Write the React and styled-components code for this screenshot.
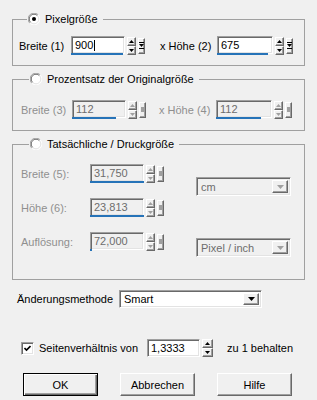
import React from 'react';
import styled, { createGlobalStyle, css } from 'styled-components';

const Global = createGlobalStyle`
  html, body { margin: 0; padding: 0; background: #f0f0f0; }
  body { font-family: "Liberation Sans", Arial, sans-serif; font-size: 11px; color: #000; }
`;

const raised = css`
  box-sizing: border-box;
  background: #f0f0f0;
  border: 1px solid;
  border-color: #fff #696969 #696969 #fff;
  box-shadow: inset -1px -1px 0 #a0a0a0;
`;

const sunken = css`
  box-sizing: border-box;
  border: 1px solid;
  border-color: #a0a0a0 #fff #fff #a0a0a0;
  box-shadow: inset 1px 1px 0 #696969, inset -1px -1px 0 #e3e3e3;
`;

const Dialog = styled.div`
  width: 317px;
  height: 400px;
  box-sizing: border-box;
  padding: 12px 12px 0 12px;
  display: flex;
  flex-direction: column;
`;

const Group = styled.fieldset`
  margin: 0 0 ${(p) => p.$mb}px 0;
  padding: ${(p) => p.$pt}px 0 ${(p) => p.$pb}px ${(p) => p.$pl}px;
  border: 1px solid #a0a0a0;
  min-inline-size: 0;
  display: flex;
  flex-direction: column;
`;

const Legend = styled.legend`
  margin-left: 8px;
  padding: 0 5px 0 1px;
  height: 14px;
  display: flex;
  align-items: center;
  gap: 5px;
`;

const Row = styled.div`
  display: flex;
  align-items: center;
`;

const Label = styled.span`
  width: ${(p) => p.$w}px;
  margin-left: ${(p) => p.$ml || 0}px;
  flex: none;
  white-space: nowrap;
  color: ${(p) => (p.$disabled ? '#8f8f8f' : '#000')};
`;

const FieldWrap = styled.div`
  display: flex;
  align-items: center;
  gap: 2px;
`;

const FieldCol = styled.div`
  display: flex;
  flex-direction: column;
  width: ${(p) => p.$w}px;
`;

const Box = styled.div`
  ${sunken};
  height: 18px;
  background: ${(p) => (p.$disabled ? '#f0f0f0' : '#fff')};
  color: ${(p) => (p.$disabled ? '#6d6d6d' : '#000')};
  padding: 0 3px;
  display: flex;
  align-items: center;
`;

const Caret = styled.span`
  width: 1px;
  height: 11px;
  background: #000;
  margin-left: 1px;
`;

const Bar = styled.div`
  height: 2px;
  margin-top: -1px;
  background: #2673b8;
`;

const Spin = styled.div`
  display: flex;
  flex-direction: column;
  width: ${(p) => p.$w}px;
  height: ${(p) => p.$h}px;
`;

const SpinBtn = styled.div`
  ${raised};
  flex: 1;
  display: flex;
  align-items: center;
  justify-content: center;
`;

const Extra = styled.div`
  ${raised};
  width: 7px;
  height: 16px;
  display: flex;
  align-items: center;
  justify-content: center;
`;

const Dots = styled.div`
  width: 3px;
  height: 5px;
  background: #a0a0a0;
`;

const RightCol = styled.div`
  display: flex;
  flex-direction: column;
  gap: ${(p) => p.$gap}px;
  padding-top: ${(p) => p.$pt}px;
  margin-left: ${(p) => p.$ml}px;
`;

const Cols = styled.div`
  display: flex;
`;

const LeftCol = styled.div`
  display: flex;
  flex-direction: column;
  gap: ${(p) => p.$gap}px;
`;

const Select = styled.div`
  ${sunken};
  width: ${(p) => p.$w}px;
  height: ${(p) => p.$h}px;
  background: ${(p) => (p.$disabled ? '#f0f0f0' : '#fff')};
  color: ${(p) => (p.$disabled ? '#6d6d6d' : '#000')};
  display: flex;
  align-items: center;
  justify-content: space-between;
  padding: 2px 2px 2px 4px;
`;

const SelectArrow = styled.div`
  ${raised};
  width: 16px;
  height: 100%;
  display: flex;
  align-items: center;
  justify-content: center;
`;

const MethodRow = styled(Row)`
  margin-top: 10px;
  padding-left: 5px;
`;

const AspectRow = styled(Row)`
  margin-top: 31px;
  padding-left: 9px;
`;

const Check = styled.div`
  ${sunken};
  width: 13px;
  height: 13px;
  background: #fff;
  display: flex;
  align-items: center;
  justify-content: center;
  margin-right: 5px;
  flex: none;
`;

const Buttons = styled.div`
  display: flex;
  gap: 22px;
  margin-top: 16px;
  padding-left: 11px;
`;

const Button = styled.div`
  ${raised};
  width: 75px;
  height: 23px;
  display: flex;
  align-items: center;
  justify-content: center;
  ${(p) =>
    p.$default &&
    css`
      outline: 1px solid #000;
      outline-offset: -1px;
      border-color: #000 #000 #000 #000;
      box-shadow: inset 1px 1px 0 #fff, inset -1px -1px 0 #696969, inset -2px -2px 0 #a0a0a0;
    `}
`;

const Tri = ({ up, color = '#000' }) => (
  <svg width="5" height="3" viewBox="0 0 5 3">
    <path d={up ? 'M2.5 0 L5 3 L0 3 Z' : 'M0 0 L5 0 L2.5 3 Z'} fill={color} />
  </svg>
);

const BigTri = ({ color = '#000' }) => (
  <svg width="7" height="4" viewBox="0 0 7 4">
    <path d="M0 0 H7 L3.5 4 Z" fill={color} />
  </svg>
);

const DropGlyph = () => (
  <svg width="5" height="8" viewBox="0 0 5 8">
    <rect x="0" y="0" width="5" height="1" fill="#000" />
    <path d="M0 2 H5 L2.5 5 Z" fill="#000" />
    <rect x="0" y="6" width="5" height="1" fill="#000" />
  </svg>
);

const Radio = ({ checked }) => (
  <svg width="12" height="12" viewBox="0 0 12 12">
    <circle cx="6" cy="6" r="5.5" fill="#fff" />
    <path d="M1.8 10.2 A5.5 5.5 0 0 1 10.2 1.8" stroke="#a0a0a0" fill="none" />
    <path d="M2.6 9.4 A4.6 4.6 0 0 1 9.4 2.6" stroke="#696969" fill="none" />
    <path d="M10.2 1.8 A5.5 5.5 0 0 1 1.8 10.2" stroke="#ffffff" fill="none" />
    <path d="M9.4 2.6 A4.6 4.6 0 0 1 2.6 9.4" stroke="#e3e3e3" fill="none" />
    {checked && <circle cx="6" cy="6" r="2" fill="#000" />}
  </svg>
);

const NumField = ({ value, w = 54, bar, disabled, caret }) => (
  <FieldWrap>
    <FieldCol $w={w}>
      <Box $disabled={disabled}>
        {value}
        {caret && <Caret />}
      </Box>
      <Bar style={{ width: bar }} />
    </FieldCol>
    <Spin $w={9} $h={18}>
      <SpinBtn><Tri up color={disabled ? '#a0a0a0' : '#000'} /></SpinBtn>
      <SpinBtn><Tri color={disabled ? '#a0a0a0' : '#000'} /></SpinBtn>
    </Spin>
    <Extra>{disabled ? <Dots /> : <DropGlyph />}</Extra>
  </FieldWrap>
);

const Dropdown = ({ value, w, h, disabled }) => (
  <Select $w={w} $h={h} $disabled={disabled}>
    <span>{value}</span>
    <SelectArrow>
      <BigTri color={disabled ? '#a0a0a0' : '#000'} />
    </SelectArrow>
  </Select>
);

export default function App() {
  return (
    <>
      <Global />
      <Dialog>
        <Group $mb={6} $pt={10} $pb={10} $pl={6}>
          <Legend><Radio checked />Pixelgröße</Legend>
          <Row>
            <Label $w={52}>Breite (1)</Label>
            <NumField value="900" bar={52} caret />
            <Label $w={57} $ml={15}>x Höhe (2)</Label>
            <NumField value="675" w={56} bar={51} />
          </Row>
        </Group>

        <Group $mb={6} $pt={14} $pb={11} $pl={8}>
          <Legend><Radio />Prozentsatz der Originalgröße</Legend>
          <Row>
            <Label $w={51} $disabled>Breite (3)</Label>
            <NumField value="112" bar={44} disabled />
            <Label $w={57} $ml={13} $disabled>x Höhe (4)</Label>
            <NumField value="112" w={56} bar={45} disabled />
          </Row>
        </Group>

        <Group $mb={0} $pt={13} $pb={22} $pl={8}>
          <Legend><Radio />Tatsächliche / Druckgröße</Legend>
          <Cols>
            <LeftCol $gap={15}>
              <Row>
                <Label $w={69} $disabled>Breite (5):</Label>
                <NumField value="31,750" bar={54} disabled />
              </Row>
              <Row>
                <Label $w={69} $disabled>Höhe (6):</Label>
                <NumField value="23,813" bar={54} disabled />
              </Row>
              <Row>
                <Label $w={69} $disabled>Auflösung:</Label>
                <NumField value="72,000" bar={2} disabled />
              </Row>
            </LeftCol>
            <RightCol $gap={42} $pt={13} $ml={32}>
              <Dropdown value="cm" w={95} h={19} disabled />
              <Dropdown value="Pixel / inch" w={95} h={19} disabled />
            </RightCol>
          </Cols>
        </Group>

        <MethodRow>
          <Label $w={102}>Änderungsmethode</Label>
          <Dropdown value="Smart" w={143} h={18} />
        </MethodRow>

        <AspectRow>
          <Check>
            <svg width="7" height="7" viewBox="0 0 7 7">
              <path d="M0.5 3 L2.5 5 L6.5 1" stroke="#000" strokeWidth="1.6" fill="none" />
            </svg>
          </Check>
          <Label $w={108}>Seitenverhältnis von</Label>
          <FieldWrap>
            <FieldCol $w={53}>
              <Box>1,3333</Box>
            </FieldCol>
            <Spin $w={11} $h={18}>
              <SpinBtn><Tri up /></SpinBtn>
              <SpinBtn><Tri /></SpinBtn>
            </Spin>
          </FieldWrap>
          <Label $w={80} $ml={14}>zu 1 behalten</Label>
        </AspectRow>

        <Buttons>
          <Button $default>OK</Button>
          <Button>Abbrechen</Button>
          <Button>Hilfe</Button>
        </Buttons>
      </Dialog>
    </>
  );
}
